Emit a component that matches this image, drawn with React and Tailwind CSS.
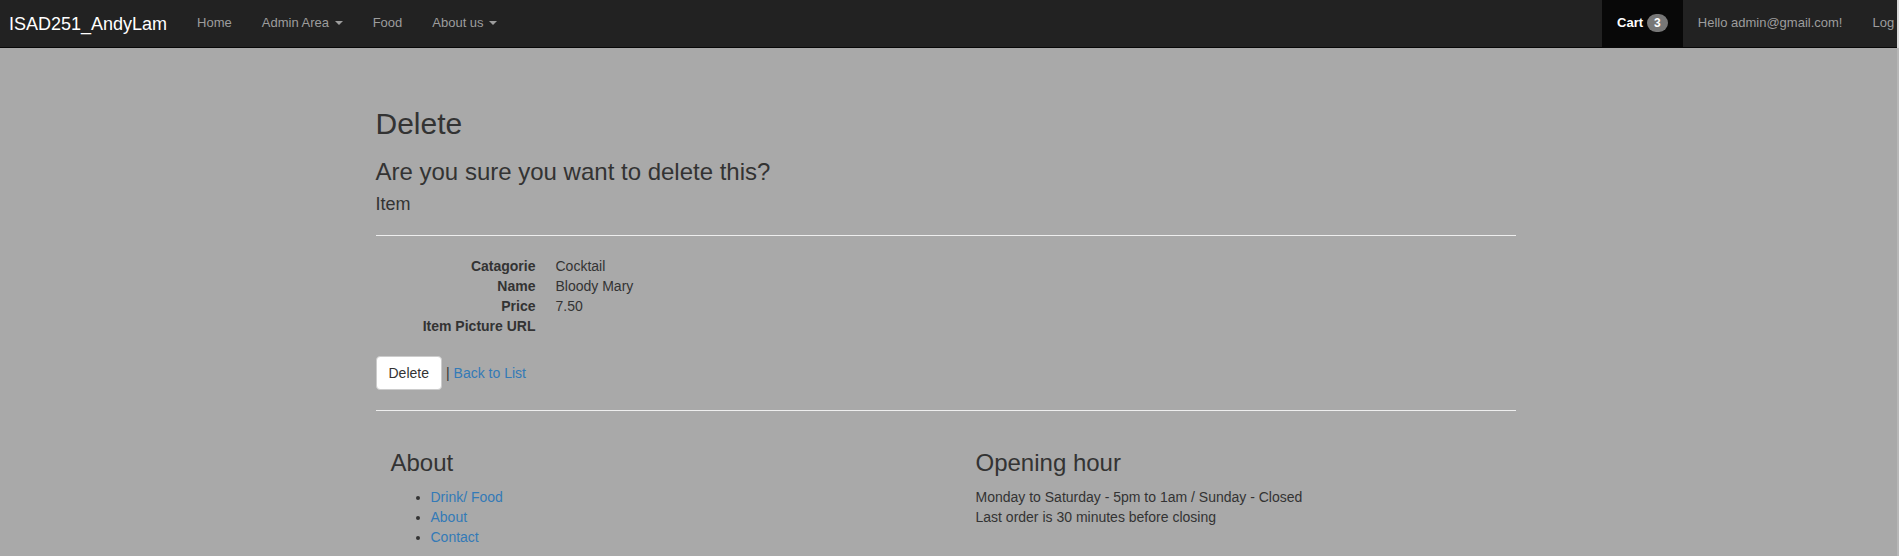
import React from 'react';

const caret = (
  <span className="ml-[2px] inline-block h-0 w-0 border-x-4 border-t-4 border-x-transparent border-t-[#9d9d9d] align-middle" />
);

const leftLinks = [
  { label: 'Home' },
  { label: 'Admin Area', dropdown: true },
  { label: 'Food' },
  { label: 'About us', dropdown: true },
];

const details = [
  { label: 'Catagorie', value: 'Cocktail' },
  { label: 'Name', value: 'Bloody Mary' },
  { label: 'Price', value: '7.50' },
  { label: 'Item Picture URL', value: '' },
];

function Navbar() {
  return (
    <nav className="flex h-[48px] overflow-hidden border-b border-[#080808] bg-[#222] text-[13px] leading-5 text-[#9d9d9d]">
      <a className="flex h-[47px] shrink-0 items-center pl-[9px] pr-[15px] text-[18px] text-white">ISAD251_AndyLam</a>
      <ul className="flex shrink-0">
        {leftLinks.map(link => (
          <li key={link.label} className="flex h-[47px] items-center px-[15px] pb-[2px]">
            <span>
              {link.label}
              {link.dropdown && ' '}
              {link.dropdown && caret}
            </span>
          </li>
        ))}
      </ul>
      <ul className="ml-auto mr-[-30px] flex shrink-0">
        <li className="flex h-[47px] items-center gap-1 bg-[#080808] px-[15px] pb-[2px] font-bold text-white">
          <span>Cart</span>
          <span className="rounded-[10px] bg-[#777] px-[7px] py-[3px] text-[12px] leading-none">3</span>
        </li>
        <li className="flex h-[47px] items-center px-[15px] pb-[2px]">Hello admin@gmail.com!</li>
        <li className="flex h-[47px] items-center px-[15px] pb-[2px]">Log off</li>
      </ul>
    </nav>
  );
}

export default function App() {
  return (
    <div className="flex min-h-[556px] bg-[#a9a9a9] font-['Liberation_Sans',Arial,sans-serif] text-[14px] leading-5 text-[#333]">
      <div className="min-w-0 flex-1 overflow-hidden">
        <Navbar />

        <div className="pr-[6px]">
          <div className="mx-auto w-[1170px] px-[15px] pt-[38px]">
            <h2 className="mt-[21px] text-[30px] leading-[1.1]">Delete</h2>
            <h3 className="mt-[19px] text-[24px] leading-[1.1]">Are you sure you want to delete this?</h3>
            <h4 className="mt-[10px] text-[18px] leading-[1.1]">Item</h4>
            <hr className="mt-5 border-t border-[#eee]" />

            <dl className="mt-5 grid grid-cols-[160px_1fr] gap-x-5">
              {details.map(row => (
                <React.Fragment key={row.label}>
                  <dt className="truncate text-right font-bold">{row.label}</dt>
                  <dd className="min-h-5">{row.value}</dd>
                </React.Fragment>
              ))}
            </dl>

            <div className="mt-5 flex items-baseline">
              <button className="rounded border border-[#ccc] bg-white px-3 py-[6px] leading-5 text-[#333]">Delete</button>
              <span className="ml-1 mr-1">|</span>
              <a className="text-[#337ab7]">Back to List</a>
            </div>

            <hr className="mt-5 border-t border-[#eee]" />

            <footer className="mt-[39px] grid grid-cols-[585px_1fr]">
              <div className="pl-[15px]">
                <h3 className="text-[24px] leading-[1.1]">About</h3>
                <ul className="mt-[10px] list-disc pl-10">
                  <li><a className="text-[#337ab7]">Drink/ Food</a></li>
                  <li><a className="text-[#337ab7]">About</a></li>
                  <li><a className="text-[#337ab7]">Contact</a></li>
                </ul>
              </div>
              <div className="pl-[15px]">
                <h3 className="text-[24px] leading-[1.1]">Opening hour</h3>
                <p className="mt-[10px]">
                  Monday to Saturday - 5pm to 1am / Sunday - Closed
                  <br />
                  Last order is 30 minutes before closing
                </p>
              </div>
            </footer>
          </div>
        </div>
      </div>

      {/* thin window edge on the right */}
      <div className="flex w-[2px] shrink-0 flex-col">
        <div className="h-[48px] bg-[#d9d9d9]" />
        <div className="flex-1 bg-[#b8b8b8]" />
      </div>
    </div>
  );
}
